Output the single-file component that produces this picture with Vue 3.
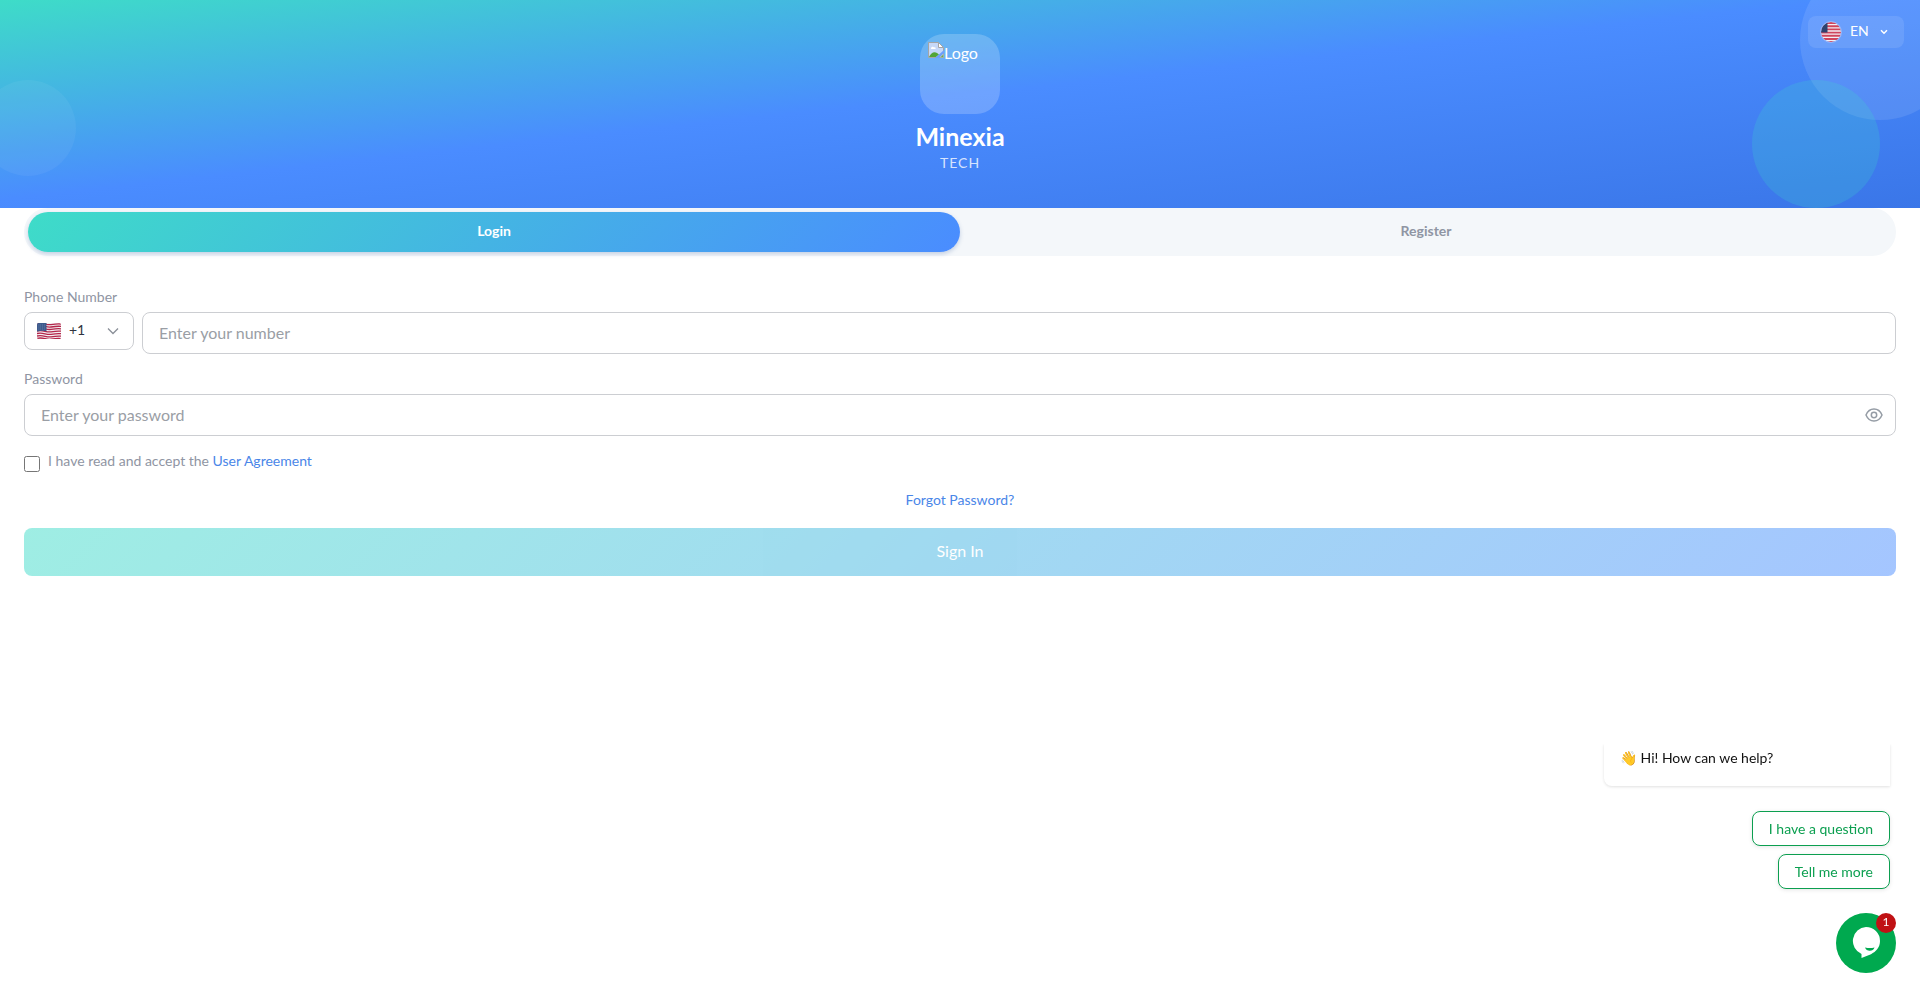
<script setup>
import { ref } from 'vue'

const activeTab = ref('login')
const language = ref('EN')
const dialCode = ref('+1')
const phone = ref('')
const password = ref('')
const showPassword = ref(false)
const accepted = ref(false)

const tabs = [
  { id: 'login', label: 'Login' },
  { id: 'register', label: 'Register' }
]

const quickReplies = ['I have a question', 'Tell me more']
</script>

<template>
  <div class="page">
    <header class="hero">
      <span class="circle circle-top"></span>
      <span class="circle circle-bottom"></span>
      <span class="circle circle-left"></span>

      <button class="lang" type="button" aria-label="Language">
        <svg class="lang-flag" viewBox="0 0 22 22" aria-hidden="true">
          <defs>
            <clipPath id="round"><circle cx="11" cy="11" r="10" /></clipPath>
          </defs>
          <g clip-path="url(#round)">
            <rect width="22" height="22" fill="#f3eef2" />
            <path d="M0 2h22M0 5.2h22M0 8.4h22M0 11.6h22M0 14.8h22M0 18h22M0 21h22" stroke="#d0455c" stroke-width="1.9" />
            <rect width="7.5" height="11.5" fill="#2c4470" />
          </g>
          <circle cx="11" cy="11" r="10.5" fill="none" stroke="#a9c1f8" stroke-opacity="0.7" />
        </svg>
        <span>{{ language }}</span>
        <svg class="lang-arrow" viewBox="0 0 8 6" aria-hidden="true">
          <path d="M1 1.2l3 3 3-3" fill="none" stroke="#fff" stroke-width="1.5" />
        </svg>
      </button>

      <div class="logo">
        <svg width="16" height="16" viewBox="0 0 16 16" aria-hidden="true">
          <path d="M.5.5h10l5 5v10H.5z" fill="#c6d8f8" stroke="#a5a5a5" />
          <path d="M3 6.5c0-2 2.500-2.500 3-1 1.500-.5 2 .6 1.500 1.500H3z" fill="#fff" />
          <path d="M1 15c2-4 5-6 8-4l2 1.500L8 15z" fill="#52a535" />
          <path d="M10.500.5v5h5z" fill="#fff" stroke="#a5a5a5" />
          <path d="M7 16l9-8v3l-5 5z" fill="#6da0fb" />
          <path d="M12 15.500h3.500V12z" fill="#63ac4c" stroke="#b5b5b5" stroke-width=".6" />
        </svg>
        <span>Logo</span>
      </div>
      <h1>Minexia</h1>
      <p class="tagline">TECH</p>
    </header>

    <main class="content">
      <div class="tabs" role="tablist">
        <button
          v-for="tab in tabs"
          :key="tab.id"
          class="tab"
          :class="{ active: activeTab === tab.id }"
          type="button"
          role="tab"
          :aria-selected="activeTab === tab.id"
          @click="activeTab = tab.id"
        >{{ tab.label }}</button>
      </div>

      <form class="form" @submit.prevent>
        <div class="field">
          <label for="phone">Phone Number</label>
          <div class="phone-row">
            <div class="dial">
              <svg class="dial-flag" viewBox="0 0 24 16" aria-hidden="true">
                <defs>
                  <clipPath id="wave"><rect width="24" height="16" rx="1.500" /></clipPath>
                </defs>
                <g clip-path="url(#wave)">
                  <rect width="24" height="16" fill="#f4eff2" />
                  <g fill="none" stroke="#b3264a" stroke-width="1.300">
                    <path d="M0 .8c6-1.600 9 1.600 14 .8s7-1 10-.6" />
                    <path d="M0 3.200c6-1.600 9 1.600 14 .8s7-1 10-.6" />
                    <path d="M0 5.600c6-1.600 9 1.600 14 .8s7-1 10-.6" />
                    <path d="M0 8c6-1.600 9 1.600 14 .8s7-1 10-.6" />
                    <path d="M0 10.500c6-1.600 9 1.600 14 .8s7-1 10-.6" />
                    <path d="M0 13c6-1.600 9 1.600 14 .8s7-1 10-.6" />
                    <path d="M0 15.400c6-1.600 9 1.600 14 .8s7-1 10-.6" />
                  </g>
                  <path d="M0 0h9.500v8.200Q5 7 0 8.400z" fill="#3d5a8c" />
                  <path d="M1.500 2h7M1.500 4h7M1.500 6h7" stroke="#8298bc" stroke-width=".7" stroke-dasharray=".8 1" />
                </g>
              </svg>
              <select v-model="dialCode" aria-label="Country code">
                <option>+1</option>
              </select>
              <svg class="dial-arrow" viewBox="0 0 12 8" aria-hidden="true">
                <path d="M1 1.500l5 5 5-5" fill="none" stroke="#8a8f98" stroke-width="1.300" />
              </svg>
            </div>
            <input id="phone" v-model="phone" type="tel" placeholder="Enter your number">
          </div>
        </div>

        <div class="field">
          <label for="password">Password</label>
          <div class="password">
            <input id="password" v-model="password" :type="showPassword ? 'text' : 'password'" placeholder="Enter your password">
            <button class="eye" type="button" aria-label="Show password" @click="showPassword = !showPassword">
              <svg width="18" height="14" viewBox="0 0 18 14" fill="none" stroke="#959ca5" stroke-width="1.500" aria-hidden="true">
                <path d="M1 7C2.600 3.200 5.400 1 9 1s6.400 2.200 8 6c-1.600 3.800-4.400 6-8 6S2.600 10.800 1 7z" />
                <circle cx="9" cy="7" r="2.700" />
              </svg>
            </button>
          </div>
        </div>

        <div class="agree">
          <input id="agree" v-model="accepted" type="checkbox">
          <label for="agree">I have read and accept the <a href="#">User Agreement</a></label>
        </div>

        <a class="forgot" href="#">Forgot Password?</a>
        <button class="submit" type="submit" :disabled="!accepted">Sign In</button>
      </form>
    </main>

    <aside class="chat" aria-label="Chat">
      <div class="bubble-clip">
        <p class="bubble">👋 Hi! How can we help?</p>
      </div>
      <button v-for="reply in quickReplies" :key="reply" class="reply" type="button">{{ reply }}</button>
      <button class="launcher" type="button" aria-label="Open chat">
        <svg width="28" height="32" viewBox="0 0 28 32" aria-hidden="true">
          <path d="M14 0a14 14 0 0 1 14 14c0 6.500-4 10.500-9 13.200L9.500 31v-4.100A14 14 0 0 1 14 0z" fill="#fff" />
          <path d="M13 20.500q5 1.200 9.500 0-1.200 3.200-4.700 3.200T13 20.500z" fill="#00a94f" />
        </svg>
        <span class="badge">1</span>
      </button>
    </aside>
  </div>
</template>

<style>
body {
  margin: 0;
  background: #fff;
}
</style>

<style scoped>
.page {
  font-family: Lato, "Liberation Sans", sans-serif;
  font-size: 14px;
  line-height: 18px;
  color: #8f95a3;
}

button, input, select {
  font: inherit;
  box-sizing: border-box;
}

button {
  padding: 0;
  border: 0;
  background: none;
  cursor: pointer;
}

a {
  color: #4a86e8;
  text-decoration: none;
}

.hero {
  position: relative;
  overflow: hidden;
  display: flex;
  flex-direction: column;
  align-items: center;
  box-sizing: border-box;
  padding: 34px 24px 36px;
  color: #fff;
  background: linear-gradient(to bottom right, #3edcc8 0%, #4a8cff 48%, #3a76e8 100%);
}

.circle {
  position: absolute;
  border-radius: 50%;
  background: rgba(255, 255, 255, 0.1);
}
.circle-top { width: 160px; height: 160px; top: -40px; right: -40px; }
.circle-bottom { width: 128px; height: 128px; bottom: 0; right: 40px; background: rgba(62, 224, 200, 0.2); }
.circle-left { width: 96px; height: 96px; top: 80px; left: -20px; background: rgba(255, 255, 255, 0.05); }

.lang {
  position: absolute;
  top: 16px;
  right: 16px;
  display: flex;
  align-items: center;
  width: 96px;
  height: 32px;
  padding: 0 16px 0 12px;
  gap: 8px;
  border-radius: 8px;
  color: #fff;
  background: rgba(255, 255, 255, 0.1);
}
.lang span { padding-bottom: 2px; }
.lang-flag { width: 22px; height: 22px; }
.lang-arrow { width: 8px; height: 6px; margin-left: auto; }

.logo {
  display: flex;
  box-sizing: border-box;
  width: 80px;
  height: 80px;
  padding: 8px;
  border-radius: 24px;
  font-size: 16px;
  line-height: 22px;
  background: rgba(255, 255, 255, 0.2);
}

h1 {
  margin: 6px 0 0;
  font-size: 25px;
  line-height: 32px;
  font-weight: 700;
}

.tagline {
  margin: 2px 0 0;
  letter-spacing: 1px;
  color: rgba(255, 255, 255, 0.8);
}

.content {
  padding: 0 24px;
}

.tabs {
  display: flex;
  padding: 4px;
  border-radius: 24px;
  background: #f4f7fa;
}

.tab {
  flex: 1;
  height: 40px;
  padding-bottom: 2px;
  border-radius: 20px;
  font-weight: 700;
  color: #8f95a3;
}
.tab.active {
  color: #fff;
  background: linear-gradient(135deg, #3edcc8, #4a8cff);
  box-shadow: 0 2px 4px rgba(50, 90, 160, 0.25);
}

.form {
  display: flex;
  flex-direction: column;
  margin-top: 32px;
}

.field {
  display: flex;
  flex-direction: column;
  gap: 6px;
  margin-bottom: 16px;
}

.phone-row {
  display: flex;
  align-items: flex-start;
  gap: 8px;
}

.field input, .dial select {
  width: 100%;
  border: 1px solid #ccced2;
  border-radius: 8px;
  background: #fff;
  outline: none;
}
.field input {
  height: 42px;
  padding: 0 16px 2px;
  font-size: 16px;
  color: #303440;
}
.field input::placeholder { color: #9a9ea5; opacity: 1; }
.phone-row input { flex: 1; min-width: 0; }

.dial {
  position: relative;
  width: 110px;
}
.dial select {
  display: block;
  height: 38px;
  padding: 0 32px 2px 44px;
  appearance: none;
  color: #303440;
}
.dial-flag {
  position: absolute;
  top: 11px;
  left: 13px;
  width: 24px;
  height: 16px;
}
.dial-arrow {
  position: absolute;
  top: 15px;
  right: 15px;
  width: 12px;
  height: 8px;
  pointer-events: none;
}

.password { position: relative; }
.password input { display: block; padding-right: 48px; }
.eye {
  position: absolute;
  top: 0;
  right: 8px;
  display: flex;
  align-items: center;
  justify-content: center;
  width: 28px;
  height: 42px;
}

.agree {
  display: flex;
  align-items: flex-start;
  gap: 8px;
}
.agree input {
  width: 16px;
  height: 16px;
  margin: 4px 0 0;
}

.forgot {
  align-self: center;
  margin: 19px 0;
}

.submit {
  height: 48px;
  padding-bottom: 2px;
  border-radius: 8px;
  font-size: 16px;
  color: #fff;
  background: linear-gradient(135deg, #3edcc8, #4a8cff);
}
.submit:disabled { opacity: 0.5; }

.chat {
  position: fixed;
  right: 24px;
  bottom: 20px;
  display: flex;
  flex-direction: column;
  align-items: flex-end;
}
.bubble-clip {
  overflow: hidden;
  padding: 0 4px 8px;
  margin: 0 2px 17px 0;
}
.bubble {
  box-sizing: border-box;
  width: 286px;
  margin: 0;
  padding: 5px 16px 19px;
  border-radius: 0 0 0 8px;
  color: #111;
  background: #fff;
  box-shadow: 0 1px 3px rgba(0, 0, 0, 0.12);
}
.reply {
  height: 35px;
  margin: 0 6px 8px 0;
  padding: 0 16px;
  border: 1px solid #0c9f50;
  border-radius: 8px;
  color: #0c9f50;
  background: #fff;
  box-shadow: 0 1px 4px rgba(0, 0, 0, 0.1);
}
.launcher {
  position: relative;
  display: flex;
  align-items: center;
  justify-content: center;
  width: 60px;
  height: 60px;
  margin-top: 16px;
  border-radius: 50%;
  background: #00a94f;
}
.badge {
  position: absolute;
  top: 0;
  right: 0;
  width: 20px;
  height: 20px;
  border-radius: 50%;
  font-size: 12px;
  color: #fff;
  background: #c01114;
}
</style>
